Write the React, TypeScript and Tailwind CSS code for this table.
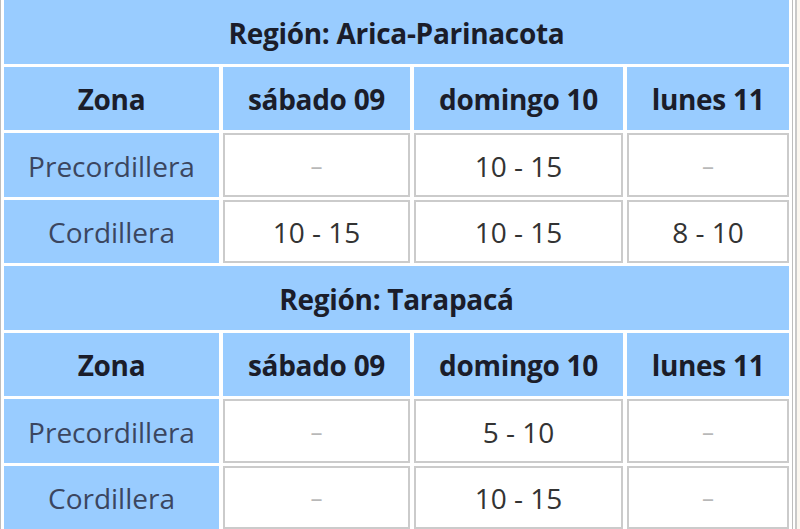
import { Fragment } from "react";

const regions = [
  {
    name: "Región: Arica-Parinacota",
    rows: [
      { zona: "Precordillera", values: ["-", "10 - 15", "-"] },
      { zona: "Cordillera", values: ["10 - 15", "10 - 15", "8 - 10"] },
    ],
  },
  {
    name: "Región: Tarapacá",
    rows: [
      { zona: "Precordillera", values: ["-", "5 - 10", "-"] },
      { zona: "Cordillera", values: ["-", "10 - 15", "-"] },
    ],
  },
];

const days = ["sábado 09", "domingo 10", "lunes 11"];

export default function App() {
  return (
    <div className="w-[800px] h-[529px] overflow-hidden bg-[#fbf7f0] font-['Open_Sans',sans-serif]">
      <div className="w-[797px] bg-white border-r-2 border-[#c9c9c9]">
        <div className="w-[793px] -mt-[3px] border-x border-[#bdbdbd] p-[3px]">
          <div className="grid grid-cols-[215px_187px_209px_162px] gap-x-[4px] gap-y-[3px] auto-rows-[63.5px]">
            {regions.map((r) => (
              <Fragment key={r.name}>
                {/* región */}
                <div className="col-span-4 bg-[#99ccff] flex items-center justify-center pt-[2px] text-[28px] font-bold tracking-[-0.3px] text-[#1b1d2a]">
                  {r.name}
                </div>
                <div className="bg-[#99ccff] flex items-center justify-center pt-[2px] text-[28px] font-bold tracking-[-0.3px] text-[#1b1d2a]">
                  Zona
                </div>
                {days.map((d) => (
                  <div
                    key={d}
                    className="bg-[#99ccff] flex items-center justify-center pt-[2px] text-[28px] font-bold tracking-[-0.3px] text-[#1b1d2a]"
                  >
                    {d}
                  </div>
                ))}
                {r.rows.map((row) => (
                  <Fragment key={row.zona}>
                    <div className="bg-[#99ccff] flex items-center justify-center pt-[2px] text-[28px] text-[#3b4660]">
                      {row.zona}
                    </div>
                    {row.values.map((v, i) => (
                      <div
                        key={i}
                        className="bg-white border-2 border-[#cbcbcb] flex items-center justify-center pt-[2px]"
                      >
                        {v === "-" ? (
                          <span className="text-[24px] text-[#b8b8b8]">–</span>
                        ) : (
                          <span className="text-[28px] text-[#333333]">{v}</span>
                        )}
                      </div>
                    ))}
                  </Fragment>
                ))}
              </Fragment>
            ))}
          </div>
        </div>
      </div>
    </div>
  );
}
